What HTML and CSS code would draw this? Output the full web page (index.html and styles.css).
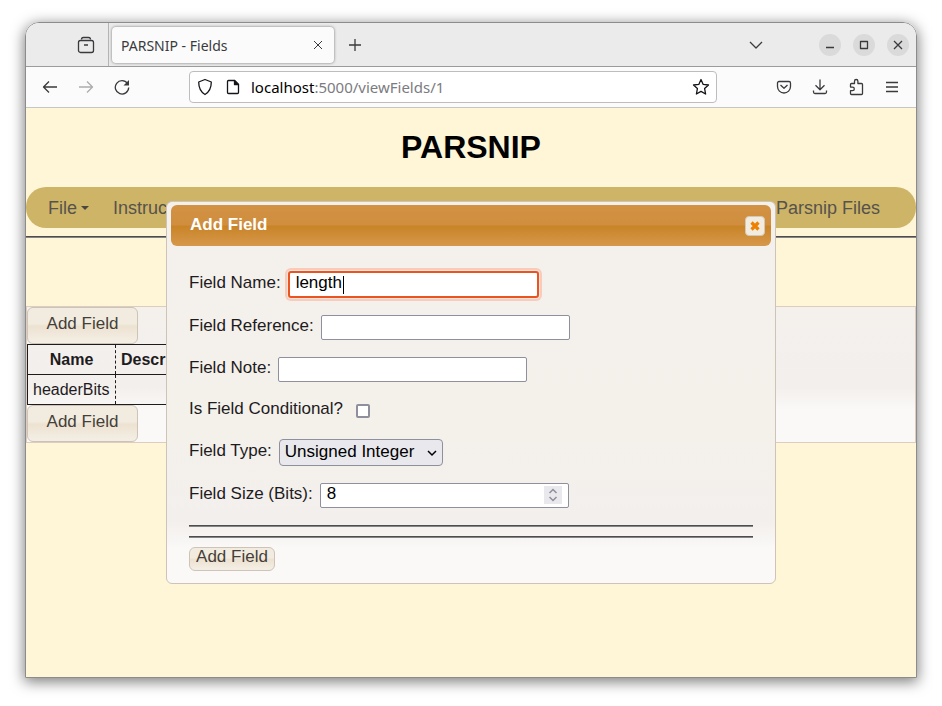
FILE: index.html
```html
<!DOCTYPE html>
<html lang="en">
<head>
<meta charset="utf-8">
<title>PARSNIP - Fields</title>
<link rel="stylesheet" href="styles.css">
</head>
<body>
<div class="window">
  <div class="tabstrip">
    <button class="recent" type="button" aria-label="Recent browsing">
      <svg class="icon" width="18" height="18" viewBox="0 0 18 18"><path d="M4.500 3.500c0-1.500.5-2 2-2h5c1.500 0 2 .5 2 2"/><rect x="1.500" y="4.500" width="15" height="12" rx="2"/><path d="M7 9h4"/></svg>
    </button>
    <div class="tab">
      <span class="tab-title">PARSNIP - Fields</span>
      <button class="plain" type="button" aria-label="Close tab">
        <svg class="icon thin" width="16" height="16" viewBox="0 0 16 16"><path d="M4 4l8 8M12 4l-8 8"/></svg>
      </button>
    </div>
    <button class="plain newtab" type="button" aria-label="New tab">
      <svg class="icon" width="16" height="16" viewBox="0 0 16 16"><path d="M8 2v12M2 8h12"/></svg>
    </button>
    <button class="plain list" type="button" aria-label="List all tabs">
      <svg class="icon" width="16" height="16" viewBox="0 0 16 16"><path d="M2 5l6 6 6-6"/></svg>
    </button>
    <div class="controls">
      <button class="round" type="button" aria-label="Minimize"><svg class="icon" width="16" height="16" viewBox="0 0 16 16"><path d="M4 10.500h8"/></svg></button>
      <button class="round" type="button" aria-label="Maximize"><svg class="icon" width="16" height="16" viewBox="0 0 16 16"><path d="M4.500 4.500h7v7h-7z"/></svg></button>
      <button class="round" type="button" aria-label="Close"><svg class="icon" width="16" height="16" viewBox="0 0 16 16"><path d="M4 4l8 8M12 4l-8 8"/></svg></button>
    </div>
  </div>

  <div class="toolbar">
    <button class="tool" type="button" aria-label="Back"><svg class="icon" width="16" height="16" viewBox="0 0 16 16"><path d="M15 8H1.500M7 2.500L1.500 8 7 13.500"/></svg></button>
    <button class="tool faded" type="button" aria-label="Forward"><svg class="icon" width="16" height="16" viewBox="0 0 16 16"><path d="M1 8h13.500M9 2.500l5.500 5.500L9 13.500"/></svg></button>
    <button class="tool" type="button" aria-label="Reload"><svg class="icon" width="16" height="16" viewBox="0 0 16 16"><path d="M13.500 4.500A6.700 6.700 0 1 0 14.700 8.500"/><path d="M15 1v5.500H9.500z" fill="#3a3a3e" stroke="none"/></svg></button>
    <div class="urlbar">
      <svg class="icon dark" width="16" height="18" viewBox="0 0 16 18"><path d="M8 1.500l6.300 2.500c0 6-1.500 9.700-6.300 12.500C3.200 13.700 1.700 10 1.700 4z"/></svg>
      <svg class="icon dark" width="16" height="16" viewBox="0 0 16 16"><path d="M3.500 1.500h6L13.500 5.500v8a1 1 0 0 1-1 1h-9a1 1 0 0 1-1-1v-11a1 1 0 0 1 1-1z"/><path d="M9.500 1.500l4 4h-4z" fill="#15141a"/></svg>
      <span class="url"><b>localhost</b>:5000/viewFields/1</span>
      <button class="plain star" type="button" aria-label="Bookmark">
        <svg class="icon dark" width="18" height="18" viewBox="0 0 18 18"><path d="M9 1.500l2.200 4.900 5.300.6-3.900 3.600 1 5.400L9 13.400 4.400 16l1-5.400L1.500 7l5.300-.6z"/></svg>
      </button>
    </div>
    <button class="tool" type="button" aria-label="Save to Pocket"><svg class="icon" width="16" height="16" viewBox="0 0 16 16"><path d="M3 2.500h10a1.500 1.500 0 0 1 1.500 1.500v3.500a6.500 6.500 0 0 1-13 0V4A1.500 1.500 0 0 1 3 2.500z"/><path d="M4.500 6L8 9.300 11.500 6"/></svg></button>
    <button class="tool" type="button" aria-label="Downloads"><svg class="icon" width="16" height="16" viewBox="0 0 16 16"><path d="M8 .5v10M3.500 6.200L8 10.700l4.500-4.500M1.500 11.500V13a1.500 1.500 0 0 0 1.500 1.500h10a1.500 1.500 0 0 0 1.500-1.500v-1.500"/></svg></button>
    <button class="tool" type="button" aria-label="Extensions"><svg class="icon" width="16" height="18" viewBox="0 0 16 18"><path d="M3.500 5.500H6.500V3.200a1.700 1.700 0 0 1 3.400 0v2.300h3.600a1 1 0 0 1 1 1v9a1 1 0 0 1-1 1h-10a1 1 0 0 1-1-1v-2.800h2a1.800 1.800 0 0 0 0-3.600H2.500V6.500a1 1 0 0 1 1-1z"/></svg></button>
    <button class="tool" type="button" aria-label="Menu"><svg class="icon" width="16" height="16" viewBox="0 0 16 16"><path d="M2 3.500h12M2 8h12M2 12.500h12"/></svg></button>
  </div>

  <div class="page">
    <h1>PARSNIP</h1>
    <nav class="menu">
      <a class="drop" href="#file">File</a>
      <a href="#instructions">Instructions</a>
      <a class="last" href="#files">Parsnip Files</a>
    </nav>
    <hr>
    <section class="panel">
      <button class="btn large" type="button">Add Field</button>
      <table>
        <thead><tr><th>Name</th><th>Description</th></tr></thead>
        <tbody><tr><td>headerBits</td><td></td></tr></tbody>
      </table>
      <button class="btn large" type="button">Add Field</button>
    </section>

    <div class="dialog" role="dialog" aria-labelledby="dialog-title">
      <div class="titlebar">
        <span id="dialog-title">Add Field</span>
        <button class="close" type="button" aria-label="Close dialog"><svg width="12" height="12" viewBox="0 0 12 12"><path d="M2.500 2.500l7 7M9.500 2.500l-7 7" stroke="#ef8000" stroke-width="3.200"/></svg></button>
      </div>
      <form class="form">
        <div class="row">
          <label for="name">Field Name:</label>
          <span class="focused"><input class="box active" id="name" type="text" value="length"><span class="caret"></span></span>
        </div>
        <div class="row"><label for="ref">Field Reference:</label><input class="box" id="ref" type="text"></div>
        <div class="row"><label for="note">Field Note:</label><input class="box" id="note" type="text"></div>
        <div class="row check"><label for="cond">Is Field Conditional?</label><input id="cond" type="checkbox"></div>
        <div class="row">
          <label for="type">Field Type:</label>
          <span class="select"><select id="type"><option>Unsigned Integer</option></select><svg class="arrow" width="10" height="7" viewBox="0 0 10 7"><path d="M1 1l4 4 4-4"/></svg></span>
        </div>
        <div class="row">
          <label for="size">Field Size (Bits):</label>
          <span class="number"><input class="box" id="size" type="number" value="8"><svg class="spin" width="18" height="18" viewBox="0 0 18 18"><path d="M5.500 7L9 3.500 12.500 7M5.500 11L9 14.500 12.500 11"/></svg></span>
        </div>
        <div class="rules"><hr><hr></div>
        <button class="btn small" type="button">Add Field</button>
      </form>
    </div>
  </div>
</div>
</body>
</html>
```
FILE: styles.css
```css
* { box-sizing: border-box; }
body {
  margin: 0;
  min-height: 100vh;
  padding: 22px 25px 28px;
  display: flex;
  background: #fff;
  font-family: "Liberation Sans", Arial, sans-serif;
  font-size: 16px;
  color: #1e1b1d;
}
button { font-family: inherit; margin: 0; padding: 0; }
hr {
  margin: 0;
  border: 0;
  height: 2px;
  background: linear-gradient(#4d4d4f 50%, #858585 50%);
}

.window {
  flex: 1;
  min-width: 0;
  display: flex;
  flex-direction: column;
  border: 1px solid #8c8c8c;
  border-radius: 14px 14px 0 0;
  overflow: hidden;
  box-shadow: 0 3px 14px 1px rgba(0, 0, 0, .5);
}
.icon { display: block; fill: none; stroke: #3a3a3e; stroke-width: 1.3; stroke-linejoin: round; }
.icon.thin { stroke-width: 1; }
.icon.dark { stroke: #15141a; }
.plain, .tool, .recent { border: 0; background: none; display: grid; place-items: center; }

.tabstrip {
  display: flex;
  align-items: center;
  height: 44px;
  background: #ebebeb;
  border-bottom: 1px solid #9b9b9b;
  font-family: "Noto Sans", sans-serif;
}
.recent {
  align-self: stretch;
  width: 83px;
  padding: 0 13px 0 0;
  border-right: 1px solid #b4b4b4;
  justify-items: end;
}
.tab {
  width: 222px;
  height: 36px;
  margin-left: 3px;
  padding: 0 8px 0 9px;
  display: flex;
  align-items: center;
  justify-content: space-between;
  background: #fbfbfb;
  border-radius: 4px;
  box-shadow: 0 0 3px rgba(0, 0, 0, .5);
  font-size: 14px;
  color: #3a3a3e;
}
.tab-title { padding-top: 2px; }
.newtab { margin-left: 13px; }
.list { margin-left: auto; }
.controls { display: flex; gap: 12px; margin: 0 7px 0 55px; }
.round {
  width: 22px;
  height: 22px;
  border: 0;
  border-radius: 50%;
  background: #dadada;
  display: grid;
  place-items: center;
}

.toolbar {
  display: flex;
  align-items: center;
  height: 41px;
  padding: 0 6px;
  background: #fbfbfb;
  border-bottom: 1px solid #c6c6c6;
}
.tool { width: 36px; height: 32px; }
.faded { opacity: .4; }
.urlbar {
  flex: 1;
  min-width: 0;
  height: 32px;
  margin: 0 49px;
  padding: 0 6px 0 7px;
  display: flex;
  align-items: center;
  gap: 12px;
  background: #fff;
  border: 1px solid #bdbdbf;
  border-radius: 4px;
}
.url { font: 15px "Noto Sans", sans-serif; color: #7c7b80; margin-left: -2px; white-space: nowrap; }
.url b { font-weight: 400; color: #000; }
.star { margin-left: auto; }

.page { flex: 1; position: relative; background: #fff5d7; }
h1 { margin: 0; padding: 21px 0 22px; font-size: 32px; line-height: 36px; text-align: center; color: #000; }
.menu {
  display: flex;
  align-items: center;
  gap: 24px;
  height: 41px;
  padding: 2px 36px 0 22px;
  background: #ceb467;
  border-radius: 20px;
  font-size: 18px;
}
.menu a { color: #56524c; text-decoration: none; }
.drop::after {
  content: "";
  display: inline-block;
  margin-left: 4px;
  vertical-align: 4px;
  border: 4px solid transparent;
  border-top-color: #4a4640;
  border-bottom: 0;
}
.last { margin-left: auto; }
.page > hr { margin-top: 8px; }

.panel {
  margin-top: 68px;
  border: 1px solid #ddccc0;
  background: linear-gradient(#f4f0ec, #f3efed 60%, #faf9f7 76%, #faf9f8);
}
.btn {
  display: block;
  border: 1px solid #cdc3b7;
  border-radius: 6px;
  background: linear-gradient(#f1ecdf 0 45%, #ede2d1 52%, #f4efe6);
  color: #453e39;
  font-size: 17px;
  line-height: 18px;
}
.large { padding: 7px 18px 11px; height: 37px; min-width: 111px; }
.small { padding: 0 5px 4px; height: 24px; min-width: 86px; }
table { width: 60%; border-collapse: collapse; border: 1px solid #1e1b1d; }
th, td { height: 30px; padding: 0 5px; border-bottom: 1px solid #1e1b1d; }
th:first-child, td:first-child { width: 88px; border-right: 1px dashed #1e1b1d; }
th + th { text-align: left; }

.dialog {
  position: absolute;
  top: 93px;
  left: 0;
  right: 0;
  width: 610px;
  max-width: 100%;
  margin: 0 auto;
  padding: 3px 4px 12px;
  border: 1px solid #cdc3b7;
  border-radius: 6px;
  background: linear-gradient(#f4f0ec, #f4f1eb 60%, #f3efed 84%, #faf9f7 91%, #faf9f7);
}
.titlebar {
  display: flex;
  justify-content: space-between;
  align-items: center;
  height: 41px;
  padding: 0 6px 0 19px;
  border-radius: 6px;
  background: linear-gradient(#d29244, #d08e3e 48%, #c98427 52%, #d6984c);
  color: #fff;
  font-size: 17px;
  font-weight: 700;
}
.titlebar span { padding-bottom: 2px; }
.close {
  width: 20px;
  height: 20px;
  border: 1px solid #d5c8b3;
  border-radius: 4px;
  background: #f1ecdf;
  display: grid;
  place-items: center;
}
.form {
  display: flex;
  flex-direction: column;
  gap: 17px;
  padding: 25px 18px 0;
  font-size: 17px;
}
.row { display: flex; align-items: center; gap: 7px; }
.row label { line-height: 20px; padding-bottom: 3px; }
.check { gap: 13px; }
.box {
  display: block;
  width: 249px;
  height: 25px;
  padding: 0 6px 4px;
  border: 1px solid #8f8f9d;
  border-radius: 2px;
  background: #fff;
  color: #000;
  font: 17px "Liberation Sans", Arial, sans-serif;
}
.box:focus { outline: 0; }
.active {
  width: 251px;
  height: 27px;
  border: 2px solid #e95420;
  border-radius: 3px;
  box-shadow: 0 0 0 1px #f8e4dc, 0 0 0 3px #f8cbbb;
}
.focused, .select, .number { position: relative; }
.caret { position: absolute; left: 55px; top: 5px; width: 1px; height: 18px; background: #000; }
input[type="checkbox"] {
  appearance: none;
  width: 14px;
  height: 14px;
  margin: 0;
  border: 2px solid #8f8f9d;
  border-radius: 2px;
  background: #fff;
}
select {
  appearance: none;
  display: block;
  width: 164px;
  height: 27px;
  padding: 0 5px 3px;
  border: 1px solid #8f8f9d;
  border-radius: 4px;
  background: #e9e9ed;
  color: #000;
  font: 17px "Liberation Sans", Arial, sans-serif;
}
.arrow, .spin { position: absolute; fill: none; stroke-width: 1.5; pointer-events: none; }
.arrow { right: 6px; top: 11px; stroke: #000; }
.spin { right: 7px; top: 3px; background: #e9e9ed; stroke: #8f8f9d; }
input[type="number"] { appearance: textfield; }
input[type="number"]::-webkit-inner-spin-button { appearance: none; margin: 0; }
.rules { display: grid; gap: 9px; margin-bottom: -8px; }
.small { align-self: flex-start; }
```
